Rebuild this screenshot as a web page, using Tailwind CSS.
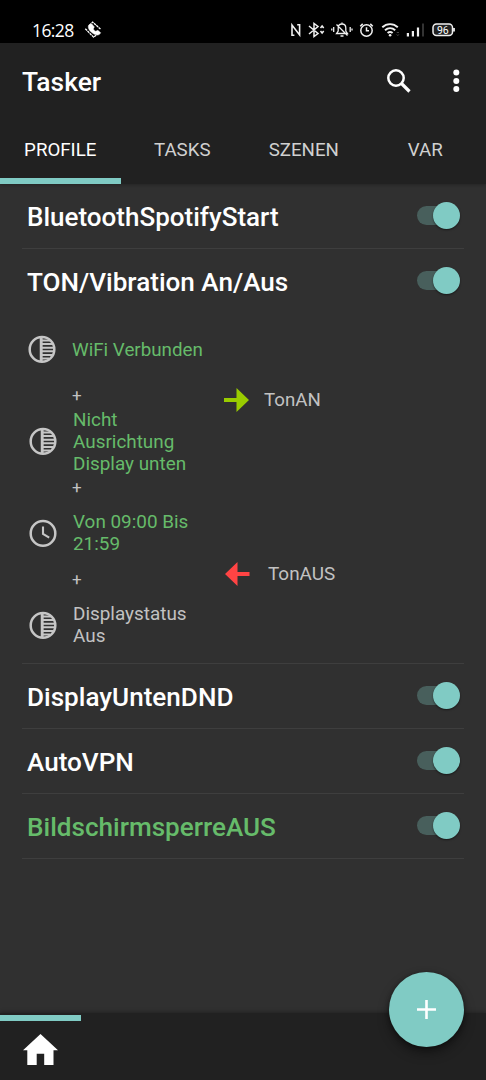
<!DOCTYPE html>
<html lang="de">
<head>
<meta charset="utf-8">
<title>Tasker</title>
<script src="https://cdn.jsdelivr.net/npm/@tailwindcss/browser@4"></script>
</head>
<body class="bg-[#303030]">
<svg class="hidden">
  <defs>
    <symbol id="state" viewBox="0 0 28 28">
      <circle cx="14" cy="14.400" r="12.3" fill="none" stroke="#c6c6c6" stroke-width="2.5"/>
      <path d="M13.2 2.400v24" stroke="#c6c6c6" stroke-width="2.9"/>
      <path d="M14 5.500h8M14 9.100h11M14 12.700h12M14 16.300h12M14 19.900h10M14 23.500h7" stroke="#c6c6c6" stroke-width="2"/>
    </symbol>
    <symbol id="clock" viewBox="0 0 28 28">
      <circle cx="14" cy="14.400" r="12.3" fill="none" stroke="#c6c6c6" stroke-width="2.5"/>
      <path d="M14 7.400v7.6l6.2 3.7" fill="none" stroke="#c6c6c6" stroke-width="2.1"/>
    </symbol>
  </defs>
</svg>
<div class="w-[486px] h-[1080px] overflow-hidden flex flex-col bg-[#303030] font-['Roboto',sans-serif] text-white">
  <div class="h-[43px] shrink-0 bg-black flex items-start pt-[19px] pl-[32px] pr-[29px]">
    <span class="w-[42px] text-[17.500px] leading-[22px] whitespace-nowrap font-['Open_Sans',sans-serif] tracking-[-0.6px]">16:28</span>
    <svg class="ml-[10px] mt-[2px]" width="19" height="18" viewBox="0 0 19 18" fill="none" stroke="#fff">
      <path d="M5.500 4.200 8.700 1.100 16.800 8.400M1.300 7.800 9.600 16.100 12.500 14" stroke-width="1.300" stroke-dasharray="2.500 .6"/>
      <path d="M4.800 4c-1.300 2 0 5 2.700 7.300s5.700 3.500 7.700 2.300l1.500-1.800-2.900-2.500-2 1c-1-.4-2-1.300-2.500-2.400l1-2-2.500-2.900z" fill="#fff" stroke="#fff" stroke-width=".5"/>
    </svg>
    <div class="grow"></div>
    <svg class="mt-[1px]" width="168" height="20" viewBox="289 20 168 20" fill="none" stroke="#f0f0f0" stroke-width="1.5">
      <path d="M292 36V25l7.600 10V24M292 35.300h2.400M299.600 24.700h-2.400" stroke-width="1.600"/>
      <path d="M309 26l9 7.500-4 3V23.500l4 3-9 7.500M320.500 28l1.600-2 1.600 2M320.500 31l1.600 2 1.600-2"/>
      <path d="M336.500 33.500h11l-1.700-2.500v-3c0-2.500-1.500-4-3.800-4s-3.800 1.500-3.800 4v3zM336.500 24.500l11 11M340.500 36h3M333.700 27v5M331.800 28.500v2M350.200 27v5M352 28.500v2M342 22.500v2" stroke-width="1.300"/>
      <circle cx="366.500" cy="30.500" r="5.700"/><path d="M366.500 27.300v3.500h2.500M360.200 26.200l2.500-2.300M372.800 26.200l-2.500-2.300"/>
      <path d="M382.300 27.300c4.500-4.300 11-4.300 15.500 0M385 30.300c3-2.800 7.200-2.800 10.200 0M387.600 33c1.500-1.300 3.500-1.300 5 0" stroke-width="1.900"/><circle cx="390.100" cy="35.300" r="1.300" fill="#f0f0f0" stroke="none"/>
      <path d="M396.800 33l1-1 1 1M396.800 34.500l1 1 1-1" stroke="#555" stroke-width="1"/>
      <path d="M407.900 33v3.500M412.900 31v5.500M418 27.500v9" stroke-width="2.200"/><path d="M423 23.500v13" stroke="#333" stroke-width="2"/>
      <rect x="433" y="24" width="19.500" height="11.500" rx="3.500" fill="#222"/><path d="M454 28v3.500" stroke-width="1.800"/>
      <text x="442.800" y="33.500" text-anchor="middle" font-family="Roboto" font-size="10.500" fill="#fff" stroke="none">96</text>
    </svg>
  </div>
  <header class="h-[141px] shrink-0 bg-[#212121] shadow-[0_1px_3px_rgba(0,0,0,0.25)]">
    <div class="h-[74px] flex items-center pl-[22px] pr-[18px]">
      <h1 class="text-[26.400px] leading-8 font-medium grow pt-[3px]">Tasker</h1>
      <svg class="mr-[33px] mt-[1px]" width="24" height="24" viewBox="0 0 24 24" fill="none" stroke="#fff"><circle cx="9" cy="9" r="7.700" stroke-width="2.500"/><path d="M14.500 14.500l8 8" stroke-width="3.200"/></svg>
      <svg width="24" height="24" viewBox="0 0 24 24" fill="#fff"><circle cx="12.300" cy="4.500" r="3"/><circle cx="12.300" cy="13" r="3"/><circle cx="12.300" cy="21" r="3"/></svg>
    </div>
    <nav class="h-[67px] grid grid-cols-4 text-[18.700px] leading-6 text-center text-[#d0d0d0]">
      <div class="mr-px pt-[21px] border-b-6 border-[#80cbc4] text-white">PROFILE</div>
      <div class="pt-[21px]">TASKS</div>
      <div class="pt-[21px]">SZENEN</div>
      <div class="pt-[21px]">VAR</div>
    </nav>
  </header>
  <main class="grow px-[22px] text-[26.100px] font-medium">
    <div class="h-[65px] border-b border-[#3e3e3e] flex items-center justify-between pl-[5px] pr-1">
      <span class="pt-[3px] text-[26px]">BluetoothSpotifyStart</span>
      <div class="w-[43px] h-[27px] mb-[2px] flex items-center"><div class="w-[38px] h-[19px] rounded-full bg-[#485f5c]"></div><div class="w-[27px] h-[27px] -ml-[22px] shrink-0 rounded-full bg-[#80cbc4] shadow-[0_1px_2px_rgba(0,0,0,0.5)]"></div></div>
    </div>
    <section class="h-[415px] border-b border-[#3e3e3e]">
      <div class="h-[64px] flex items-center justify-between pl-[5px] pr-1">
        <span class="pt-[3px]">TON/Vibration An/Aus</span>
        <div class="w-[43px] h-[27px] mb-px flex items-center"><div class="w-[38px] h-[19px] rounded-full bg-[#485f5c]"></div><div class="w-[27px] h-[27px] -ml-[22px] shrink-0 rounded-full bg-[#80cbc4] shadow-[0_1px_2px_rgba(0,0,0,0.5)]"></div></div>
      </div>
      <div class="flex text-[18.900px] leading-[22px] font-normal text-[#c2c2c2]">
        <div class="w-[202px] pt-[3px] text-[#66bb6a]">
          <div class="h-[66px] flex items-center pl-[6px]"><svg class="overflow-visible" width="28" height="28"><use href="#state"/></svg><p class="ml-4 pt-[2px] whitespace-nowrap text-[18.800px]">WiFi Verbunden</p></div>
          <p class="h-[26px] pl-[50px] pt-[2px] text-[#c2c2c2] text-[17px]">+</p>
          <div class="h-[66px] flex items-center pl-[7px]"><svg class="overflow-visible" width="28" height="28"><use href="#state"/></svg><p class="ml-4 pt-[2px] whitespace-nowrap">Nicht<br>Ausrichtung<br>Display unten</p></div>
          <p class="h-[26px] pl-[50px] pt-[2px] text-[#c2c2c2] text-[17px]">+</p>
          <div class="h-[66px] flex items-center pl-[7px]"><svg class="overflow-visible" width="28" height="28"><use href="#clock"/></svg><p class="ml-4 whitespace-nowrap">Von 09:00 Bis<br>21:59</p></div>
          <p class="h-[26px] pl-[50px] pt-[2px] text-[#c2c2c2] text-[17px]">+</p>
          <div class="h-[66px] flex items-center pl-[7px] text-[#c2c2c2]"><svg class="overflow-visible" width="28" height="28"><use href="#state"/></svg><p class="ml-4 whitespace-nowrap">Displaystatus<br>Aus</p></div>
        </div>
        <div>
          <div class="h-[174px] flex items-center"><svg width="25" height="24" viewBox="0 0 25 24" fill="#99cc00"><path d="M0 10h12.500V0L25 12 12.500 24V14H0z"/></svg><span class="ml-[15px] text-[18.700px]">TonAN</span></div>
          <div class="h-[174px] flex items-center"><svg class="ml-[1px]" width="25" height="24" viewBox="0 0 25 24" fill="#ff4444"><path d="M24.500 10H12.500V0L0 12l12.500 12V14H24.500z"/></svg><span class="ml-[18px]">TonAUS</span></div>
        </div>
      </div>
    </section>
    <div class="h-[65px] border-b border-[#3e3e3e] flex items-center justify-between pl-[5px] pr-1">
      <span class="pt-[3px]">DisplayUntenDND</span>
      <div class="w-[43px] h-[27px] mb-[2px] flex items-center"><div class="w-[38px] h-[19px] rounded-full bg-[#485f5c]"></div><div class="w-[27px] h-[27px] -ml-[22px] shrink-0 rounded-full bg-[#80cbc4] shadow-[0_1px_2px_rgba(0,0,0,0.5)]"></div></div>
    </div>
    <div class="h-[65px] border-b border-[#3e3e3e] flex items-center justify-between pl-[5px] pr-1">
      <span class="pt-[3px]">AutoVPN</span>
      <div class="w-[43px] h-[27px] mb-px flex items-center"><div class="w-[38px] h-[19px] rounded-full bg-[#485f5c]"></div><div class="w-[27px] h-[27px] -ml-[22px] shrink-0 rounded-full bg-[#80cbc4] shadow-[0_1px_2px_rgba(0,0,0,0.5)]"></div></div>
    </div>
    <div class="h-[65px] border-b border-[#3e3e3e] flex items-center justify-between pl-[5px] pr-1">
      <span class="pt-[3px] text-[#66bb6a]">BildschirmsperreAUS</span>
      <div class="w-[43px] h-[27px] mb-px flex items-center"><div class="w-[38px] h-[19px] rounded-full bg-[#485f5c]"></div><div class="w-[27px] h-[27px] -ml-[22px] shrink-0 rounded-full bg-[#80cbc4] shadow-[0_1px_2px_rgba(0,0,0,0.5)]"></div></div>
    </div>
  </main>
  <footer class="relative h-[67px] shrink-0 bg-[#212121] shadow-[0_-1px_4px_rgba(0,0,0,0.3)]">
    <div class="w-[81px] h-[67px] pt-[2px]">
      <div class="h-[6px] bg-[#80cbc4]"></div>
      <svg class="ml-[22px] mt-[12px]" width="37" height="33" viewBox="0 0 37 33" fill="#fff"><path d="M18.500 1L36 17.300h-4.500V32H22.200V20.800h-7.500V32H5.300V17.300H1z"/></svg>
    </div>
    <button class="absolute left-[389px] top-[-41px] w-[75px] h-[75px] rounded-full bg-[#80cbc4] shadow-[0_6px_12px_rgba(0,0,0,0.4),0_1px_4px_rgba(0,0,0,0.4)] flex items-center justify-center">
      <svg width="19" height="19" viewBox="0 0 19 19" stroke="#fff" stroke-width="2.600"><path d="M9.500 0v19M0 9.500h19"/></svg>
    </button>
  </footer>
</div>
</body>
</html>
